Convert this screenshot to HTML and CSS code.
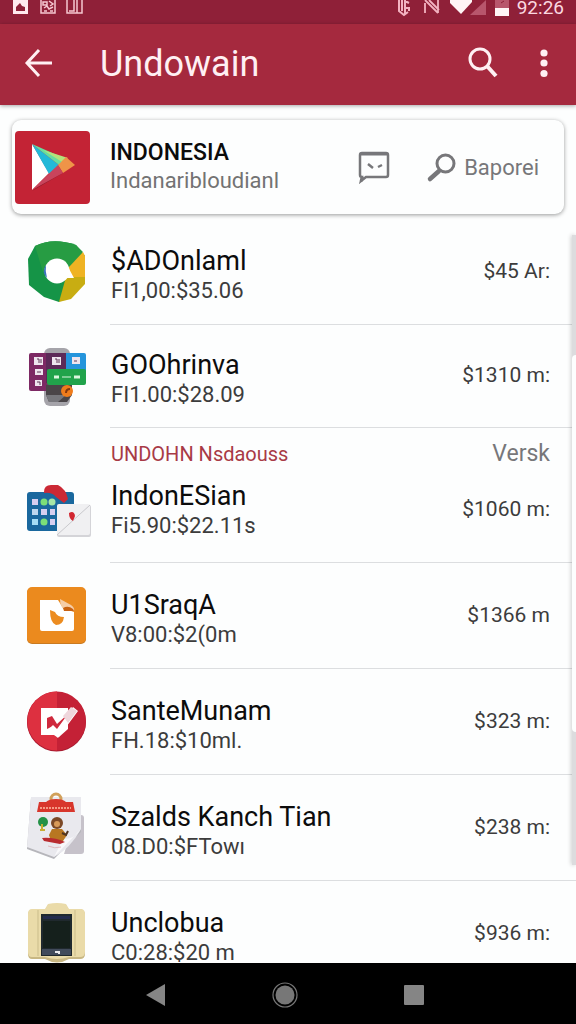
FILE: index.html
```html
<!DOCTYPE html>
<html lang="id">
<head>
<meta charset="utf-8">
<meta name="viewport" content="width=device-width, initial-scale=1">
<title>Undowain</title>
<link rel="stylesheet" href="styles.css">
</head>
<body>
<div class="status">
  <svg width="72" height="15" viewBox="0 0 72 15" aria-hidden="true">
    <path d="M0 0h15v14H0z" fill="#ffe9ee"/><path d="M3 11V7l4-4 2 3 3 1v4z" fill="#8d2038"/>
    <path d="M28 0v13h14V0" fill="none" stroke="#f6c6d0" stroke-width="1.5"/><path d="M30 2h4v3h-4zM36 1l4 3-3 2M31 8l3-2 2 3 4-2M31 11h3M37 11h3" fill="none" stroke="#f6c6d0" stroke-width="1.5"/>
    <path d="M54 0v13h15V0M64 0v13M61 0v11h-5" fill="none" stroke="#f6c6d0" stroke-width="1.5"/>
  </svg>
  <span class="spacer"></span>
  <svg width="112" height="16" viewBox="0 0 112 16" aria-hidden="true">
    <path d="M2 0v11l5 4 4-3M5 0v11M8 0v14M8 1l4 2M8 8h4v3" fill="none" stroke="#f3b3c1" stroke-width="2"/>
    <path d="M28 13V3M28 0l13 13M32 0l10 10M41 0v13" fill="none" stroke="#f3b3c1" stroke-width="1.8"/>
    <path d="M53 0h22v2L64 14 53 3z" fill="#fff5f6"/>
    <path d="M73 15 89 0v15z" fill="#b8566c"/>
    <path d="M98 0h14v9H98z" fill="#b8566c"/><path d="M98 8h14v8H98z" fill="#fff5f6"/><path d="M104 3l3-2" stroke="#8d2038"/>
  </svg>
  <span class="clock">92:26</span>
</div>
<header class="appbar">
  <button class="icon-btn" aria-label="Back">
    <svg width="28" height="28" viewBox="0 0 28 28"><path d="M27 14H2M14 1 2 14l12 13" fill="none" stroke="#fff0f3" stroke-width="3"/></svg>
  </button>
  <h1 class="appbar-title">Undowain</h1>
  <button class="icon-btn" aria-label="Search">
    <svg width="30" height="31" viewBox="0 0 30 31"><circle cx="12" cy="12" r="10" fill="none" stroke="#fff0f3" stroke-width="3"/><path d="m19 19 9 10" stroke="#fff0f3" stroke-width="4"/></svg>
  </button>
  <button class="icon-btn" aria-label="More">
    <svg width="8" height="28" viewBox="0 0 8 28" fill="#fff0f3"><circle cx="4" cy="4" r="3.6"/><circle cx="4" cy="14" r="3.6"/><circle cx="4" cy="24.500" r="3.6"/></svg>
  </button>
</header>
<main class="content">
  <section class="card">
    <svg class="card-icon" width="75" height="73" viewBox="0 0 75 73" aria-hidden="true">
      <rect width="75" height="73" rx="4" fill="#c32335"/>
      <path d="M17 60 36 46l12-4z" fill="#8f1c2c"/>
      <path d="M17 13v46l17-17z" fill="#fff"/>
      <path d="m17 13 17 30 10-9z" fill="#23b9d8"/>
      <path d="m17 13 27 21 7-6z" fill="#66dfa0"/>
      <path d="m28 19 19 12 6-4z" fill="#b4e37b"/>
      <path d="m51 26 9 8-12 8-5-8z" fill="#ef9448"/>
      <path d="M17 59 43 34l5 8z" fill="#c9445c"/>
    </svg>
    <div class="card-text">
      <h2 class="card-title">INDONESIA</h2>
      <p class="card-sub">Indanaribloudianl</p>
    </div>
    <button class="card-btn" aria-label="Feedback">
      <svg width="32" height="32" viewBox="0 0 32 32"><path d="M4 2h24q2 0 2 2v20q0 2-2 2H8l-5 4 1-4q-2 0-2-2V4q0-2 2-2z" fill="none" stroke="#77777a" stroke-width="2.500"/><path d="M3 3h26M5 26l-2 4" stroke="#77777a" stroke-width="3"/><path d="m10 13 5 4M20 16l4-2" stroke="#77777a" stroke-width="2.500"/></svg>
    </button>
    <button class="card-btn card-btn--text">
      <svg width="29" height="29" viewBox="0 0 29 29"><circle cx="18.500" cy="10.500" r="8.500" fill="none" stroke="#77777a" stroke-width="3"/><path d="m12 18-9 8" stroke="#77777a" stroke-width="4.500" stroke-linecap="round"/></svg>
      Baporei
    </button>
  </section>

  <ul class="list">
    <li class="row">
      <svg class="row-icon" width="64" height="66" viewBox="0 0 64 66" aria-hidden="true">
        <path d="M9 7Q27-2 50 6l9 11v27L33 63 18 58 3 46 2 20z" fill="#159447"/>
        <path d="M9 7Q27-2 50 6l7 7-15 17q-7-8-18-3L17 33z" fill="#279c43"/>
        <path d="m57 13 2 4v22H40l3-11z" fill="#efb323"/><path d="M59 38v7L45 60l-12 3 7-25z" fill="#c8ad12"/>
        <circle cx="31" cy="32" r="12.500" fill="#fff"/><path d="M39 22q4 8 9 17H36z" fill="#fff"/><path d="M20 26q-5 7 1 13-2-7-1-13" fill="#3972bd"/>
      </svg>
      <div class="row-text"><h3 class="row-title">$ADOnlaml</h3><p class="row-sub">FI1,00:$35.06</p></div>
      <span class="price">$45 Ar:</span>
    </li>
    <li class="row row--compact">
      <svg class="row-icon" width="64" height="66" viewBox="0 0 64 66" aria-hidden="true">
        <rect x="18" y="3" width="26" height="58" rx="6" fill="#a5a4aa"/>
        <rect x="3" y="8" width="37" height="38" rx="2" fill="#7d2964"/><path d="M20 8h20v30H20z" fill="#5c2a58"/><path d="M40 8h18q2 0 2 2v18H40z" fill="#2595dc"/>
        <path d="M20 40h26v10l-5 7H23l-3-7z" fill="#4a4548"/><path d="M20 50h20l-8 7h-9z" fill="#77777c"/>
        <g fill="#eee5ee"><path d="M8 12h9v8H8zM26 12h9v8h-9zM46 12h8v7h-8zM9 24h8v6H9zM9 35h7v6H9z"/></g>
        <path d="M11 14h2v4M15 14v4M29 14h2v4M33 14v4M48 16h3M11 27h4M11 37h3v3" stroke="#5f3857" fill="none"/>
        <rect x="21" y="24" width="39" height="16" rx="2" fill="#21a34b"/><path d="M28 32h5M48 32h6" stroke="#dcf7df" stroke-width="3"/><path d="M36 32h9" stroke="#dcf7df"/>
        <circle cx="41" cy="46" r="6" fill="#ef7c1c"/><path d="M40 48q0-4 4-4" stroke="#84370e" fill="none" stroke-width="2"/>
      </svg>
      <div class="row-text"><h3 class="row-title">GOOhrinva</h3><p class="row-sub">FI1.00:$28.09</p></div>
      <span class="price">$1310 m:</span>
    </li>
    <li class="section"><h3 class="section-title">UNDOHN Nsdaouss</h3><span class="section-side">Versk</span></li>
    <li class="row row--first">
      <svg class="row-icon" width="64" height="66" viewBox="0 0 64 66" aria-hidden="true">
        <rect x="1" y="14" width="47" height="39" rx="3" fill="#1a689e"/>
        <g fill="#d6cff0"><rect x="6" y="21" width="6" height="6"/><rect x="6" y="31" width="6" height="6" fill="#bdd7ee"/><rect x="6" y="41" width="6" height="6" fill="#a6ddf5"/><rect x="24" y="31" width="5" height="6"/><rect x="24" y="41" width="5" height="6"/><rect x="15" y="31" width="6" height="6"/></g>
        <g fill="#7cdf78"><circle cx="18" cy="24" r="3.500"/><circle cx="26" cy="24" r="3.500" fill="#a6e6a7"/><circle cx="18" cy="44" r="3.500"/></g>
        <path d="M18 14q0-7 7-7h7q8 4 10 14l-4 4-8-6q-4-5-12-4z" fill="#cb2935"/>
        <rect x="31" y="27" width="34" height="32" rx="2" fill="#d4d4d8"/><rect x="31" y="26" width="33" height="31" rx="2" fill="#f0f0f2"/><path d="M31 57 64 27" stroke="#c8c8cc"/>
        <path d="M43 35q5-3 6 3l-2 5q-4-2-4-8" fill="#d12631"/>
      </svg>
      <div class="row-text"><h3 class="row-title">IndonESian</h3><p class="row-sub">Fi5.90:$22.11s</p></div>
      <span class="price">$1060 m:</span>
    </li>
    <li class="row">
      <svg class="row-icon" width="64" height="66" viewBox="0 0 64 66" aria-hidden="true">
        <rect x="1" y="5" width="59" height="56" rx="5" fill="#c97a20"/><rect x="1" y="4" width="59" height="56" rx="5" fill="#eb8a1e"/>
        <path d="M14 17h18l5 8 11 4v17q0 2-2 2H16q-2 0-2-2z" fill="#fff"/><path d="m34 16 11 6q4 3 3 6l-9-1q-5-3-5-11" fill="#f5cda8"/><path d="M37 25q5-3 10 1l1 2H38z" fill="#c96212"/>
        <path d="m24 27 5 2q2 5 9 5-1 8-8 8-6-2-6-15" fill="#ec8c20"/>
      </svg>
      <div class="row-text"><h3 class="row-title">U1SraqA</h3><p class="row-sub">V8:00:$2(0m</p></div>
      <span class="price">$1366 m</span>
    </li>
    <li class="row">
      <svg class="row-icon" width="64" height="66" viewBox="0 0 64 66" aria-hidden="true">
        <circle cx="30.500" cy="33" r="29.500" fill="#a61b30"/><circle cx="30.500" cy="32" r="29.500" fill="#c42136"/><path d="M31 2.500v59A29.500 29.500 0 0 1 31 2.500" fill="#dd3040"/>
        <path d="M15 19h27v21l-9 8-5-2H15z" fill="#fff"/><path d="m21 40V29l5-2 5 8 12-11 3 2-15 17-4-6z" fill="#cf293d"/><path d="m22 41 5-5 4 4 16-22 5 4-20 27z" fill="#fff"/><path d="m37 27 8-9 6 4-9 12z" fill="#efd6dc"/>
      </svg>
      <div class="row-text"><h3 class="row-title">SanteMunam</h3><p class="row-sub">FH.18:$10ml.</p></div>
      <span class="price">$323 m:</span>
    </li>
    <li class="row">
      <svg class="row-icon" width="64" height="66" viewBox="0 0 64 66" aria-hidden="true">
        <path d="M50 20h5q3 0 3 3v33q0 3-3 3H38z" fill="#c6c2ca"/><path d="M5 3h50v34L28 64 1 54z" fill="#b6b6bb"/><path d="M5 2h50v32Q44 54 28 62L1 52z" fill="#e9e9ee"/><path d="M55 34 28 62l9-18q12 0 18-10" fill="#f8f8fa"/>
        <circle cx="30" cy="4" r="5" fill="none" stroke="#d1a15b" stroke-width="3"/><path d="M13 7h7q3-3 10-3 7 0 10 3h7l2 10H11z" fill="#d8362c"/><path d="M14 13h31" stroke="#f59b86" stroke-width="2" stroke-dasharray="2 1"/>
        <circle cx="17" cy="27" r="5" fill="#249248"/><path d="M16 29v7M14 35h5" stroke="#c8af34" stroke-width="2"/>
        <circle cx="31" cy="28" r="6" fill="#7c4927"/><circle cx="31" cy="29" r="3" fill="#d89a58"/><path d="M26 34h10l5 6-4 6H25l-2-6z" fill="#b87721"/><path d="m36 38 4 2 2-4" stroke="#503521" stroke-width="2" fill="none"/><path d="M16 43q12-1 23 4l-5 2-16-3z" fill="#b92b2f"/><path d="M22 51q7 3 13 1" stroke="#dfb9bd" fill="none"/>
      </svg>
      <div class="row-text"><h3 class="row-title">Szalds Kanch Tian</h3><p class="row-sub">08.D0:$FTowı</p></div>
      <span class="price">$238 m:</span>
    </li>
    <li class="row">
      <svg class="row-icon" width="64" height="66" viewBox="0 0 64 66" aria-hidden="true">
        <path d="M6 9h13l3-5q9-2 18 0l3 5h13q3 1 3 5v39q0 5-5 5H43q-12 7-24 0H6q-4 0-4-5V14q0-5 4-5" fill="#c8b783"/>
        <path d="M6 8h13l3-5q9-2 18 0l3 5h13q3 1 3 5v38q0 5-5 5H43q-12 4-24 0H6q-4 0-4-5V13q0-5 4-5" fill="#eadba9"/><path d="M12 9v46M49 9v46" stroke="#cbbd8b"/>
        <rect x="15" y="13" width="31" height="42" fill="#20292e"/><path d="M17 15h27v3H17z" fill="#232b4c"/><path d="M17 20h27v27H17z" fill="#15201c"/><path d="M16 48h29v6H16z" fill="#414b5b"/><path d="M29 51h4v2" stroke="#e8e9ed" stroke-width="2" fill="none"/>
      </svg>
      <div class="row-text"><h3 class="row-title">Unclobua</h3><p class="row-sub">C0:28:$20 m</p></div>
      <span class="price">$936 m:</span>
    </li>
  </ul>
  <div class="scroll-track" aria-hidden="true"><div class="scroll-thumb"></div></div>
</main>
<nav class="navbar">
  <button class="icon-btn" aria-label="Back"><svg width="20" height="24" viewBox="0 0 20 24"><path d="M19 1v22L0 12z" fill="#858585"/></svg></button>
  <button class="icon-btn" aria-label="Home"><svg width="26" height="26" viewBox="0 0 26 26"><circle cx="13" cy="13" r="12" fill="none" stroke="#777" stroke-width="1.200"/><circle cx="13" cy="13" r="9.500" fill="#777"/></svg></button>
  <button class="icon-btn" aria-label="Recent apps"><svg width="20" height="20" viewBox="0 0 20 20"><rect width="20" height="20" rx="1" fill="#858585"/></svg></button>
</nav>
</body>
</html>
```
FILE: styles.css
```css
* { box-sizing: border-box; }

body {
  margin: 0;
  height: 100vh;
  display: flex;
  flex-direction: column;
  overflow: hidden;
  background: #fdfefe;
  color: #0c0c0c;
  font-family: Roboto, "Liberation Sans", sans-serif;
}

h1, h2, h3, p, ul { margin: 0; padding: 0; font-weight: 400; }
ul { list-style: none; }
svg { display: block; flex: none; overflow: visible; }

button {
  margin: 0;
  padding: 0;
  border: 0;
  background: none;
  font: inherit;
  color: inherit;
}

.status {
  flex: none;
  display: flex;
  align-items: flex-start;
  height: 24px;
  padding: 0 12px 0 13px;
  background: #8f2038;
  color: #fbd9e0;
}
.spacer { flex: 1; }
.clock { margin-left: 8px; font-size: 19px; line-height: 16px; }

.appbar {
  flex: none;
  display: flex;
  align-items: center;
  height: 81px;
  padding: 0 28px 4px 25px;
  background: #a5293e;
  color: #fff0f3;
  box-shadow: 0 1px 4px rgba(0, 0, 0, 0.35);
  z-index: 1;
}
.appbar-title {
  flex: 1;
  margin-left: 47px;
  padding-top: 2px;
  font-size: 36px;
  line-height: 40px;
}
.appbar .icon-btn + .icon-btn { margin-left: 42px; }

.content {
  flex: 1;
  min-height: 0;
  position: relative;
  overflow: hidden;
  padding-top: 15px;
}

.card {
  display: flex;
  align-items: center;
  height: 94px;
  margin: 0 12px 5px;
  padding: 0 25px 0 3px;
  border-radius: 9px;
  background: #fdfefe;
  box-shadow: 0 1px 4px rgba(0, 0, 0, 0.4);
}
.card-text { flex: 1; margin-left: 20px; }
.card-title { font-size: 23px; font-weight: 500; line-height: 28px; }
.card-sub { font-size: 22px; line-height: 28px; color: #737373; }
.card-btn { display: flex; align-items: center; gap: 8px; color: #77777a; font-size: 22px; }
.card-btn--text { margin-left: 37px; }

.row {
  display: flex;
  align-items: flex-start;
  padding-left: 26px;
}
.row-icon { margin-top: 20px; }
.row-text {
  flex: 1;
  margin-left: 20px;
  padding: 25px 0 20px 1px;
  border-bottom: 1px solid #dcdee0;
}
.row-title { font-size: 27px; line-height: 34px; white-space: nowrap; }
.row-sub { font-size: 22px; line-height: 26px; color: #3c3c3c; }
.price {
  align-self: stretch;
  padding: 39px 26px 0 0;
  border-bottom: 1px solid #dcdee0;
  font-size: 21px;
  line-height: 26px;
  color: #3c3c3c;
}

.row--compact .row-text { padding-top: 23px; padding-bottom: 19px; }
.row--compact .price { padding-top: 37px; }

.section {
  display: flex;
  align-items: center;
  justify-content: space-between;
  padding: 12px 26px 0 111px;
  line-height: 28px;
}
.section-title { font-size: 20px; color: #a83a46; }
.section-side { font-size: 23px; color: #77777a; }

.row--first .row-icon { margin-top: 10px; }
.row--first .row-text { padding-top: 11px; padding-bottom: 23px; }
.row--first .price { padding-top: 28px; }

.scroll-track {
  position: absolute;
  top: 130px;
  right: 0;
  width: 4px;
  height: 630px;
  padding: 120px 0 133px;
  background: #dcdcde;
  box-shadow: -1px 0 4px rgba(0, 0, 0, 0.2);
}
.scroll-thumb { height: 100%; border-radius: 4px 0 0 4px; background: #fdfefe; }

.navbar {
  flex: none;
  display: flex;
  align-items: center;
  justify-content: center;
  gap: 106px;
  height: 61px;
  padding: 3px 6px 0 0;
  background: #000;
}
```
